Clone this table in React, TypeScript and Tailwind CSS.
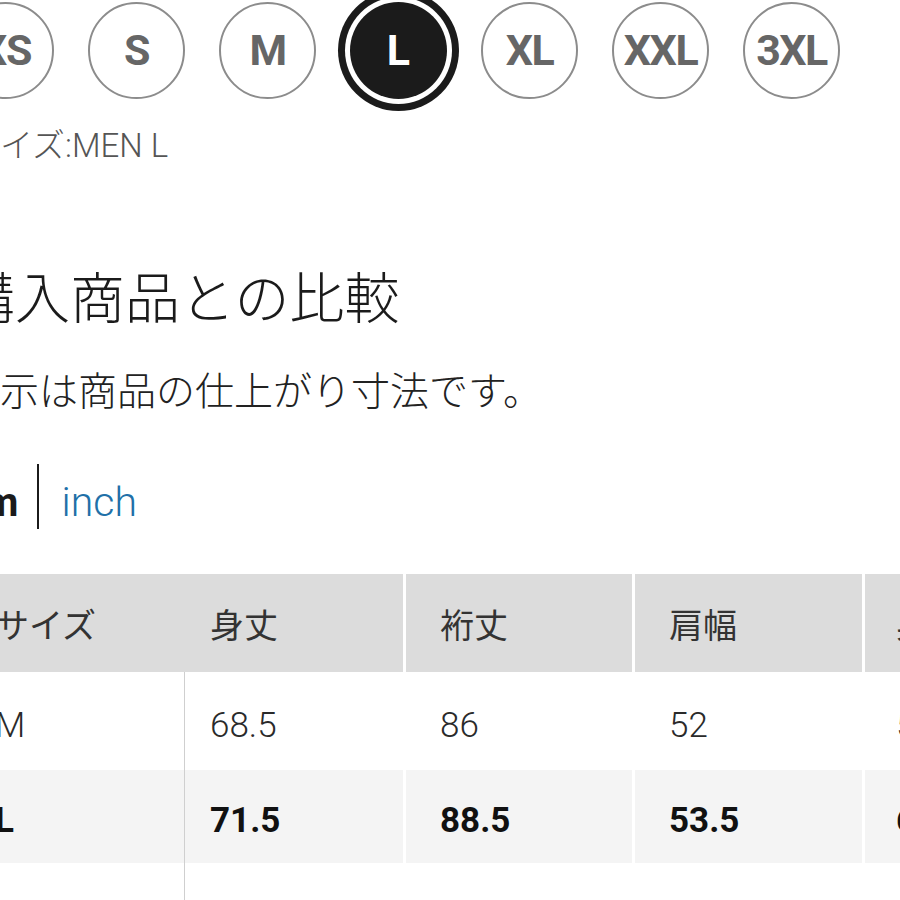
import React from 'react'

const sizes = ['XS', 'S', 'M', 'L', 'XL', 'XXL', '3XL']

const columns = [
    { label: 'サイズ', width: 'w-[228px]', pad: 'pl-[38px]', body: 'border-r border-[#cfcfcf]' },
    { label: '身丈', width: 'w-[218px]', pad: 'pl-[25px]', body: '' },
    { label: '裄丈', width: 'w-[229px]', pad: 'pl-[34px]', body: 'border-l-[3px] border-white' },
    { label: '肩幅', width: 'w-[230px]', pad: 'pl-[34px]', body: 'border-l-[3px] border-white' },
    { label: '身幅', width: 'w-[229px]', pad: 'pl-[31px]', body: 'border-l-[3px] border-white' },
]

const rows = [
    { size: 'M', values: ['68.5', '86', '52', '58'], active: false, height: 'h-[98px]' },
    { size: 'L', values: ['71.5', '88.5', '53.5', '61'], active: true, height: 'h-[93px]' },
    { size: 'XL', values: ['74.5', '91', '55', '64'], active: false, height: 'h-[98px]' },
]

const SizeChip: React.FC<{ label: string }> = ({ label }) => {
    if (label === 'L') {
        return (
            <div className="w-[97px] h-[97px] shrink-0 rounded-full bg-[#1b1b1b] text-white flex items-center justify-center text-[43px] font-bold shadow-[0_0_0_5px_#ffffff,0_0_0_12px_#1b1b1b]">
                {label}
            </div>
        )
    }
    return (
        <div className="w-[97px] h-[97px] shrink-0 rounded-full border-2 border-[#8c8c8c] bg-white text-[#666666] flex items-center justify-center text-[43px] font-bold tracking-[-1.5px]">
            {label}
        </div>
    )
}

export default function App() {
    return (
        <div className="w-[900px] h-[900px] overflow-hidden bg-white font-['Roboto','Noto_Sans_CJK_JP',sans-serif] text-[#1b1b1b]">
            <div className="-ml-[43px] w-[1200px]">
                {/* size picker */}
                <div className="flex items-center gap-[34px] mt-[2px]">
                    {sizes.map(s => <SizeChip key={s} label={s} />)}
                </div>
                <p className="ml-[10px] mt-[28px] text-[33px] leading-[38px] font-light text-[#555555]">サイズ:MEN L</p>

                {/* heading */}
                <h1 className="ml-[3px] mt-[97px] text-[55px] leading-[64px] font-light font-['Noto_Sans_CJK_JP',sans-serif]">購入商品との比較</h1>
                <p className="ml-[4px] mt-[39px] text-[39px] leading-[46px] font-light font-['Noto_Sans_CJK_JP',sans-serif] text-[#222222]">表示は商品の仕上がり寸法です。</p>

                {/* unit toggle */}
                <div className="flex items-center h-[65px] mt-[53px] ml-[6px]">
                    <span className="text-[40px] font-bold leading-none pt-[12px]">cm</span>
                    <span className="w-[2px] h-[65px] bg-[#1b1b1b] ml-[18px] mr-[23px]"></span>
                    <span className="text-[41px] font-light leading-none pt-[12px] text-[#2170a8]">inch</span>
                </div>

                {/* size table */}
                <div className="mt-[45px]">
                    <div className="flex h-[98px] bg-[#dcdcdc]">
                        {columns.map((c, i) => (
                            <div key={c.label} className={`${c.width} ${c.pad} shrink-0 flex items-center text-[34px] font-['Noto_Sans_CJK_JP',sans-serif] text-[#333333] ${i >= 2 ? 'border-l-[3px] border-white' : ''}`}>
                                {c.label}
                            </div>
                        ))}
                    </div>
                    {rows.map(r => (
                        <div key={r.size} className={`flex ${r.height} ${r.active ? 'bg-[#f4f4f4] font-bold text-[#111111]' : 'bg-white font-light text-[#2a2a2a]'}`}>
                            {[r.size, ...r.values].map((v, i) => (
                                <div key={i} className={`${columns[i].width} ${columns[i].pad} ${columns[i].body} shrink-0 flex items-center pt-[10px] text-[35px]`}>
                                    {v}
                                </div>
                            ))}
                        </div>
                    ))}
                </div>
            </div>
        </div>
    )
}
